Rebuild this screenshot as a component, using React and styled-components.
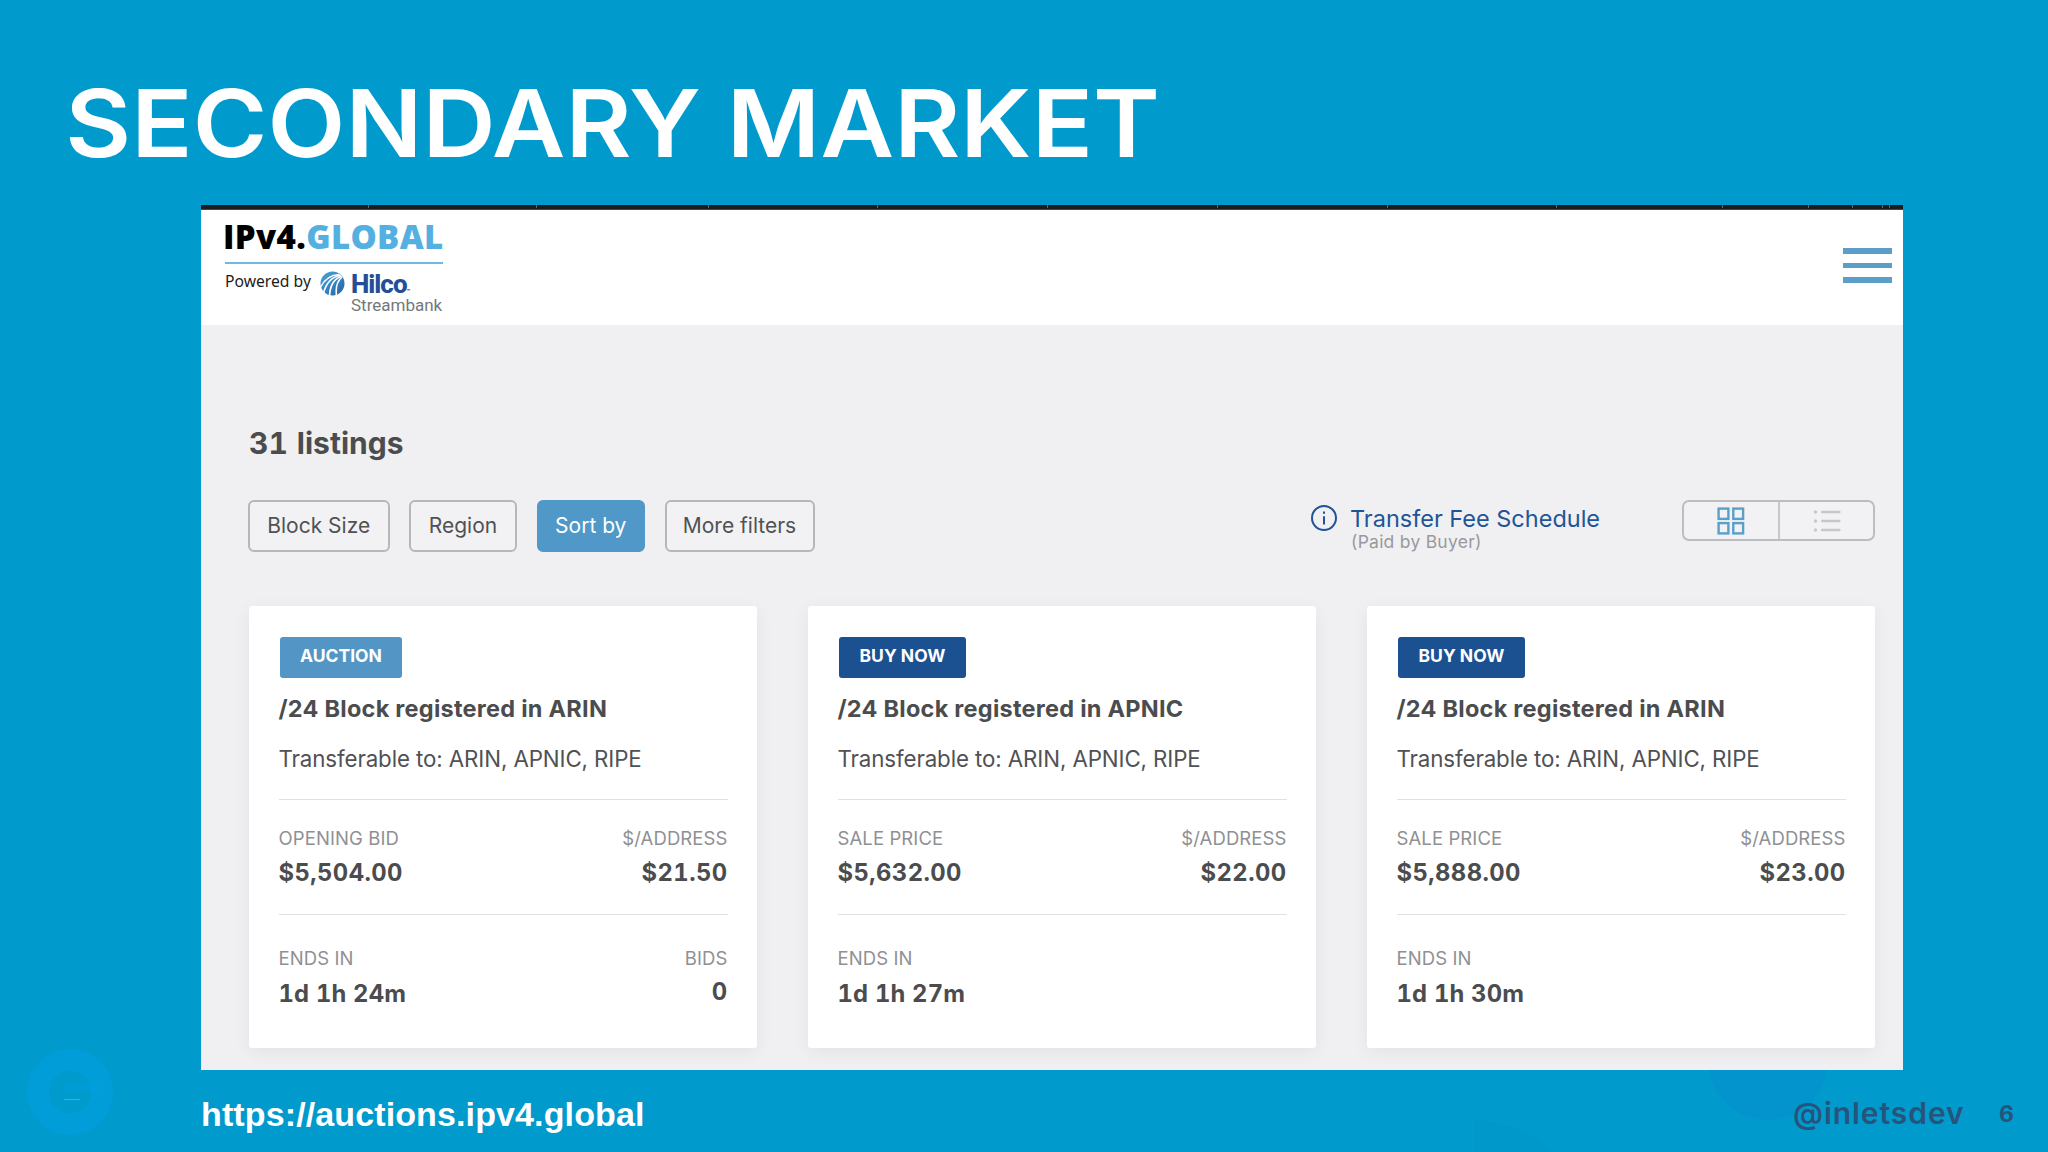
import React from 'react';
import styled, { createGlobalStyle } from 'styled-components';

const GlobalStyle = createGlobalStyle`
  * {
    box-sizing: border-box;
  }
  body {
    margin: 0;
    background: #009acd;
    font-family: Inter, "Liberation Sans", sans-serif;
  }
`;

const Slide = styled.div`
  position: relative;
  width: 2048px;
  height: 1152px;
  overflow: hidden;
  background: #009acd;
  display: flex;
  flex-direction: column;
`;

const Heading = styled.h1`
  margin: 0;
  height: 205px;
  padding: 73px 0 0 60px;
  color: #fff;
  font-size: 93px;
  font-weight: 600;
  line-height: 100px;
  letter-spacing: 0.1px;
  white-space: nowrap;
  transform: scaleX(1.089);
  transform-origin: 0 0;
`;

const Decor = styled.svg`
  position: absolute;
  left: 0;
  top: 1000px;
`;

const Panel = styled.div`
  position: relative;
  margin-left: 201px;
  width: 1702px;
  height: 865px;
  background: #f0f0f3;
  display: flex;
  flex-direction: column;
`;

const TabStrip = styled.div`
  height: 5px;
  display: flex;
  background: #1b1e20;
  border-bottom: 1px solid #4b4446;
`;

const Tab = styled.div`
  width: ${(props) => props.$width}px;
  height: 3px;
  border-right: 1px solid #5c6a70;
`;

const Header = styled.div`
  height: 115px;
  background: #fff;
  display: flex;
  justify-content: space-between;
  padding: 0 11px 0 24px;
`;

const Brand = styled.div`
  width: 218px;
  padding-top: 7px;
`;

const BrandName = styled.div`
  display: flex;
  margin-left: -2px;
  color: #000;
  font-family: "Open Sans", sans-serif;
  font-size: 33px;
  font-weight: 800;
  line-height: 40px;
  letter-spacing: 0.35px;
`;

const BrandAccent = styled.span`
  color: #55b0e2;
`;

const BrandRule = styled.div`
  height: 2px;
  margin-top: 5px;
  background: #6dbbe2;
`;

const BrandPowered = styled.div`
  display: flex;
  align-items: flex-start;
  padding-top: 7px;
`;

const PoweredText = styled.div`
  width: 95px;
  margin-top: -2px;
  color: #1c1c1c;
  font-family: "Noto Sans", sans-serif;
  font-size: 15.7px;
  line-height: 24px;
  white-space: nowrap;
`;

const Hilco = styled.div`
  padding-left: 6px;
  font-family: Roboto, sans-serif;
`;

const HilcoName = styled.div`
  height: 24px;
  color: #244f97;
  font-size: 26px;
  font-weight: 800;
  line-height: 26px;
  letter-spacing: -1px;
`;

const HilcoMark = styled.span`
  font-size: 6px;
  line-height: 1;
  letter-spacing: 0;
`;

const HilcoSub = styled.div`
  margin-top: 2px;
  color: #75787b;
  font-size: 17px;
  line-height: 16px;
`;

const Hamburger = styled.div`
  width: 49px;
  padding-top: 38px;
  display: flex;
  flex-direction: column;
  gap: 9px;
`;

const HamburgerBar = styled.div`
  height: 5.5px;
  background: #5b9fc9;
`;

const Content = styled.div`
  flex: 1;
  padding: 98px 28px 0 48px;
`;

const ListingCount = styled.h2`
  margin: 0 0 37px;
  color: #4b4c4e;
  font-size: 30px;
  font-weight: 700;
  line-height: 40px;
  word-spacing: 1px;
  font-feature-settings: "tnum";
`;

const Toolbar = styled.div`
  display: flex;
  align-items: flex-start;
  height: 52px;
  margin: 0 0 54px -1px;
`;

const FilterButton = styled.div`
  width: ${(props) => props.$width}px;
  height: 52px;
  margin-right: 19.5px;
  padding-bottom: 2px;
  display: flex;
  align-items: center;
  justify-content: center;
  border: 2px solid ${(props) => (props.$active ? '#4f98c8' : '#b6b7ba')};
  border-radius: 6px;
  background: ${(props) => (props.$active ? '#4f98c8' : '#f2f2f4')};
  color: ${(props) => (props.$active ? '#fff' : '#505154')};
  font-size: 21px;
  white-space: nowrap;
`;

const FeeLink = styled.div`
  margin: 4px 81px 0 auto;
  width: 290px;
  display: flex;
  gap: 13px;
`;

const FeeTitle = styled.div`
  color: #1f5597;
  font-size: 23.5px;
  line-height: 28px;
  padding-top: 1px;
  white-space: nowrap;
`;

const FeeNote = styled.div`
  color: #98999c;
  font-size: 17.5px;
  line-height: 18px;
  padding-left: 1px;
  letter-spacing: 0.25px;
`;

const Toggle = styled.div`
  width: 193px;
  height: 41px;
  display: flex;
  border: 2px solid #bcbdc0;
  border-radius: 7px;
  background: #f2f2f4;
`;

const ToggleSide = styled.div`
  flex: 1;
  display: flex;
  align-items: center;
  justify-content: center;
  padding-left: 1px;
  & + & {
    border-left: 2px solid #c6c7ca;
  }
`;

const Cards = styled.div`
  display: grid;
  grid-template-columns: repeat(3, 1fr);
  gap: 51px;
`;

const Card = styled.div`
  height: 442px;
  padding: 31px 29.5px 0 29.5px;
  background: #fff;
  border-radius: 3px;
  box-shadow: 0 4px 18px rgba(0, 0, 0, 0.06);
`;

const Badge = styled.div`
  display: inline-flex;
  align-items: center;
  height: 41px;
  margin-left: 1px;
  padding: 0 ${(props) => (props.$auction ? 20.5 : 21)}px 4px;
  border-radius: 3px;
  background: ${(props) => (props.$auction ? '#5396c5' : '#1b5191')};
  color: #fff;
  font-size: 17.5px;
  font-weight: 700;
`;

const CardTitle = styled.div`
  margin-top: 16px;
  color: #4b4c4e;
  font-size: 23.5px;
  font-weight: 700;
  line-height: 30px;
  letter-spacing: 0.25px;
  white-space: nowrap;
`;

const CardText = styled.div`
  margin: 20px 0 25px;
  color: #505154;
  font-size: 22.3px;
  line-height: 30px;
  letter-spacing: -0.1px;
  white-space: nowrap;
`;

const Stats = styled.div`
  display: flex;
  justify-content: space-between;
  height: ${(props) => props.$height}px;
  padding-top: ${(props) => props.$top}px;
  border-top: 1px solid #e0e1e3;
`;

const Stat = styled.div`
  text-align: ${(props) => props.$align || 'left'};
`;

const StatLabel = styled.div`
  color: #8f9093;
  font-size: 18.5px;
  line-height: 24px;
  letter-spacing: 0.1px;
`;

const StatValue = styled.div`
  margin-top: ${(props) => props.$gap}px;
  color: #4b4c4e;
  font-size: 23.8px;
  font-weight: 700;
  line-height: 30px;
  letter-spacing: ${(props) => props.$spacing || 0.4}px;
  font-feature-settings: "tnum";
`;

const Footer = styled.div`
  position: relative;
  flex: 1;
  display: flex;
  padding: 24px 33px 0 201px;
`;

const Url = styled.div`
  flex: 1;
  color: #fff;
  font-family: "Liberation Sans", Arial, sans-serif;
  font-size: 34px;
  font-weight: 700;
  line-height: 41px;
  letter-spacing: 0.12px;
`;

const Handle = styled.div`
  width: 206px;
  color: #27547a;
  font-size: 30px;
  font-weight: 600;
  line-height: 38px;
  letter-spacing: 0.95px;
`;

const PageNumber = styled.div`
  width: 16px;
  color: #27547a;
  font-size: 23px;
  font-weight: 700;
  line-height: 40px;
`;

const filters = [
  { label: 'Block Size', width: 141.5 },
  { label: 'Region', width: 108 },
  { label: 'Sort by', width: 108.5, active: true },
  { label: 'More filters', width: 150 },
];

const tabs = [168, 168, 172, 169, 170, 170, 170, 169, 166, 86, 44, 30, 7];

const listings = [
  { auction: true, registry: 'ARIN', price: '$5,504.00', perAddress: '$21.50', ends: '1d 1h 24m', bids: '0' },
  { registry: 'APNIC', price: '$5,632.00', perAddress: '$22.00', ends: '1d 1h 27m' },
  { registry: 'ARIN', price: '$5,888.00', perAddress: '$23.00', ends: '1d 1h 30m' },
];

const Globe = () => (
  <svg width="25" height="25" viewBox="0 0 25 25">
    <defs>
      <linearGradient id="globe" x1="0" y1="0" x2="1" y2="1">
        <stop offset="0" stopColor="#4aa6d8" />
        <stop offset="1" stopColor="#2363a8" />
      </linearGradient>
    </defs>
    <circle cx="12.5" cy="12.5" r="12" fill="url(#globe)" />
    <g fill="none" stroke="#fff" strokeLinecap="round">
      <path d="M0 17C4 9 10 4 19 3.5" strokeWidth="1.4" />
      <path d="M3.5 22C6 13 11 6 20 4.5" strokeWidth="1.7" />
      <path d="M9.5 25C10 15 14 8 21 5.5" strokeWidth="1.7" />
      <path d="M16.5 25C15.5 17 17.5 10 21.5 6.5" strokeWidth="1.6" />
    </g>
  </svg>
);

const InfoIcon = () => (
  <svg width="26" height="28" viewBox="0 0 26 28" fill="none" stroke="#1f5597" strokeWidth="2">
    <circle cx="13" cy="14" r="12" />
    <path d="M13 12.2V20.5" />
    <path d="M13 7.5V9.7" />
  </svg>
);

const GridIcon = () => (
  <svg width="28" height="28" viewBox="0 0 28 28" fill="none" stroke="#5a9fca" strokeWidth="2.4">
    <rect x="1.6" y="1.6" width="9.8" height="10.3" />
    <rect x="16.3" y="1.6" width="9.8" height="10.3" />
    <rect x="1.6" y="16.1" width="9.8" height="10.3" />
    <rect x="16.3" y="16.1" width="9.8" height="10.3" />
  </svg>
);

const ListIcon = () => (
  <svg width="28" height="28" viewBox="0 0 28 28" fill="#c6c7ca">
    {[5, 14, 23].map((y) => (
      <g key={y}>
        <circle cx="2.5" cy={y} r="1.7" />
        <rect x="8" y={y - 1.2} width="19.5" height="2.4" rx="1" />
      </g>
    ))}
  </svg>
);

class ListingCard extends React.Component {
  render() {
    const {
      auction,
      registry,
      price,
      perAddress,
      ends,
      bids,
    } = this.props;
    return (
      <Card>
        <Badge $auction={auction}>{auction ? 'AUCTION' : 'BUY NOW'}</Badge>
        <CardTitle>/24 Block registered in {registry}</CardTitle>
        <CardText>Transferable to: ARIN, APNIC, RIPE</CardText>
        <Stats $height={115} $top={26}>
          <Stat>
            <StatLabel>{auction ? 'OPENING BID' : 'SALE PRICE'}</StatLabel>
            <StatValue $gap={8}>{price}</StatValue>
          </Stat>
          <Stat $align="right">
            <StatLabel>$/ADDRESS</StatLabel>
            <StatValue $gap={8}>{perAddress}</StatValue>
          </Stat>
        </Stats>
        <Stats $height={130} $top={31}>
          <Stat>
            <StatLabel>ENDS IN</StatLabel>
            <StatValue $gap={9} $spacing={0.2}>{ends}</StatValue>
          </Stat>
          {bids && (
            <Stat $align="right">
              <StatLabel>BIDS</StatLabel>
              <StatValue $gap={7}>{bids}</StatValue>
            </Stat>
          )}
        </Stats>
      </Card>
    );
  }
}

export default function App() {
  return (
    <>
      <GlobalStyle />
      <Slide>
        <Decor width="2048" height="152" viewBox="0 0 2048 152">
          <circle cx="70" cy="92" r="32" fill="none" stroke="#009edb" strokeWidth="22" opacity="0.85" />
          <rect x="64" y="84" width="34" height="7" fill="#009edb" opacity="0.6" />
          <rect x="64" y="99" width="16" height="1" fill="#2fb4e4" />
          <circle cx="1768" cy="60" r="60" fill="#0494cd" />
          <path d="M1475 152V120C1500 122 1535 130 1550 152Z" fill="#0097cb" />
        </Decor>
        <Heading>SECONDARY MARKET</Heading>
        <Panel>
          <TabStrip>
            {tabs.map((width, i) => <Tab key={i} $width={width} />)}
          </TabStrip>
          <Header>
            <Brand>
              <BrandName>
                IPv4.<BrandAccent>GLOBAL</BrandAccent>
              </BrandName>
              <BrandRule />
              <BrandPowered>
                <PoweredText>Powered by</PoweredText>
                <Globe />
                <Hilco>
                  <HilcoName>Hilco<HilcoMark>™</HilcoMark></HilcoName>
                  <HilcoSub>Streambank</HilcoSub>
                </Hilco>
              </BrandPowered>
            </Brand>
            <Hamburger>
              <HamburgerBar />
              <HamburgerBar />
              <HamburgerBar />
            </Hamburger>
          </Header>
          <Content>
            <ListingCount>31 listings</ListingCount>
            <Toolbar>
              {filters.map((f) => (
                <FilterButton key={f.label} $width={f.width} $active={f.active}>{f.label}</FilterButton>
              ))}
              <FeeLink>
                <InfoIcon />
                <div>
                  <FeeTitle>Transfer Fee Schedule</FeeTitle>
                  <FeeNote>(Paid by Buyer)</FeeNote>
                </div>
              </FeeLink>
              <Toggle>
                <ToggleSide><GridIcon /></ToggleSide>
                <ToggleSide><ListIcon /></ToggleSide>
              </Toggle>
            </Toolbar>
            <Cards>
              {listings.map((l) => <ListingCard key={l.price} {...l} />)}
            </Cards>
          </Content>
        </Panel>
        <Footer>
          <Url>https://auctions.ipv4.global</Url>
          <Handle>@inletsdev</Handle>
          <PageNumber>6</PageNumber>
        </Footer>
      </Slide>
    </>
  );
}
